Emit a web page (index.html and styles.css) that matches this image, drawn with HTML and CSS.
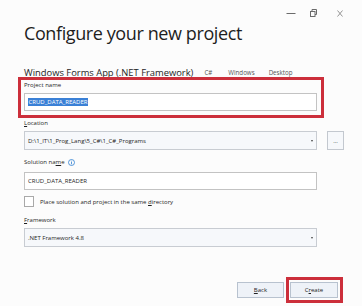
FILE: index.html
```html
<!DOCTYPE html>
<html lang="en">
<head>
<meta charset="utf-8">
<title>Configure your new project</title>
<link rel="stylesheet" href="styles.css">
</head>
<body>
<div class="window">
  <div class="titlebar">
    <svg class="tb-min" width="10" height="10" viewBox="0 0 10 10"><line x1="0.5" y1="5.5" x2="9.5" y2="5.5" stroke="#6b6b6b" stroke-width="1"/></svg>
    <svg class="tb-restore" width="7" height="8" viewBox="0 0 7 8"><rect x="0.5" y="2.5" width="4.5" height="5" fill="none" stroke="#6b6b6b"/><path d="M2 2.5V0.5H6.5V5.5H5" fill="none" stroke="#6b6b6b"/></svg>
    <svg class="tb-close" width="6" height="7" viewBox="0 0 6 7"><path d="M0.5 0.5L5.5 6.5M5.5 0.5L0.5 6.5" stroke="#8a8a8a" stroke-width="0.9"/></svg>
  </div>
  <div class="content">
    <h1 class="title">Configure your new project</h1>
    <div class="subtitle-row">
      <span class="subtitle">Windows Forms App (.NET Framework)</span>
      <span class="tag tag-cs">C#</span>
      <span class="tag tag-win">Windows</span>
      <span class="tag">Desktop</span>
    </div>
    <div class="highlight-box">
      <div class="label">Project name</div>
      <div class="input input-project"><span class="selected">CRUD_DATA_READER</span></div>
    </div>
    <div class="label label-location"><u>L</u>ocation</div>
    <div class="location-row">
      <div class="combo combo-location"><span class="value">D:\1_IT\1_Prog_Lang\5_C#\1_C#_Programs</span><span class="arrow"></span></div>
      <div class="browse">...</div>
    </div>
    <div class="label label-solution">Solution na<u>m</u>e
      <svg class="info" width="7" height="7" viewBox="0 0 14 14"><circle cx="7" cy="7" r="6" fill="none" stroke="#2f7fd1" stroke-width="1.6"/><rect x="6.2" y="6" width="1.6" height="4.6" fill="#2f7fd1"/><rect x="6.2" y="3.4" width="1.6" height="1.6" fill="#2f7fd1"/></svg>
    </div>
    <div class="input input-solution"><span class="value">CRUD_DATA_READER</span></div>
    <div class="check-row">
      <span class="checkbox"></span>
      <span class="check-label">Place solution and project in the same <u>d</u>irectory</span>
    </div>
    <div class="label label-framework"><u>F</u>ramework</div>
    <div class="combo combo-framework"><span class="value">.NET Framework 4.8</span><span class="arrow"></span></div>
  </div>
  <div class="footer">
    <div class="btn btn-back"><u>B</u>ack</div>
    <div class="create-box"><div class="btn btn-create">C<u>r</u>eate</div></div>
  </div>
</div>
</body>
</html>
```
FILE: styles.css
```css
html, body {
  margin: 0;
  padding: 0;
}
body {
  width: 362px;
  height: 306px;
  overflow: hidden;
  background: #fcfcfc;
  font-family: "Open Sans", "Noto Sans", sans-serif;
  color: #1f1f1f;
}
.window {
  display: flex;
  flex-direction: column;
  height: 306px;
}
.titlebar {
  box-sizing: border-box;
  height: 22px;
  padding: 4px 19px 0 0;
  display: flex;
  justify-content: flex-end;
  align-items: center;
}
.tb-min { margin-right: 14px; }
.tb-restore { margin-right: 20px; }
.content {
  padding-left: 24px;
  display: flex;
  flex-direction: column;
}
.title {
  margin: 0;
  font-weight: 400;
  font-size: 18px;
  letter-spacing: -0.4px;
  line-height: 22px;
  color: #1e1e1e;
  white-space: nowrap;
}
.subtitle-row {
  margin-top: 21px;
  height: 14px;
  display: flex;
  align-items: center;
  white-space: nowrap;
}
.subtitle {
  font-size: 9.4px;
  color: #1e1e1e;
}
.tag {
  font-size: 6.2px;
  color: #555;
}
.tag-cs { margin-left: 11px; margin-right: 16px; }
.tag-win { margin-right: 14px; }
.highlight-box {
  box-sizing: border-box;
  margin-top: -2px;
  margin-left: -6px;
  width: 306px;
  border: 3px solid #cc2f3b;
  padding: 0 0 4px 3px;
}
.label {
  font-size: 6px;
  line-height: 10px;
  height: 10px;
  white-space: nowrap;
  display: flex;
  align-items: center;
}
.input, .combo {
  box-sizing: border-box;
  width: 293px;
  border: 1px solid #c3c3c3;
  background: #fff;
  display: flex;
  align-items: center;
  padding-left: 3px;
  font-size: 6px;
  white-space: nowrap;
}
.input-project {
  margin-top: 3px;
  height: 18px;
}
.selected {
  background: #3a80d6;
  color: #fff;
  line-height: 8px;
  padding: 0 0.5px;
}
.label-location {
  margin-top: 0px;
}
.location-row {
  margin-top: 3px;
  display: flex;
  align-items: center;
}
.combo {
  position: relative;
  height: 19px;
  background: #f6f8fb;
  border-color: #c8ccd2;
}
.combo .arrow {
  position: absolute;
  right: 3px;
  top: 8px;
  width: 0;
  height: 0;
  border-left: 1.5px solid transparent;
  border-right: 1.5px solid transparent;
  border-top: 2px solid #444;
}
.browse {
  box-sizing: border-box;
  margin-left: 10px;
  width: 17px;
  height: 19px;
  border: 1px solid #c3c8cf;
  background: #f6f8fb;
  font-size: 6px;
  display: flex;
  align-items: center;
  justify-content: center;
  color: #333;
}
.label-solution {
  margin-top: 7px;
}
.info {
  margin-left: 3px;
}
.input-solution {
  margin-top: 5px;
  height: 18px;
}
.check-row {
  margin-top: 6px;
  height: 11px;
  display: flex;
  align-items: center;
  white-space: nowrap;
}
.checkbox {
  box-sizing: border-box;
  width: 10px;
  height: 11px;
  border: 1px solid #a9a9a9;
  background: #fff;
}
.check-label {
  margin-left: 6px;
  font-size: 6px;
}
.label-framework {
  margin-top: 8px;
}
.combo-framework {
  margin-top: 3px;
}
.footer {
  margin-top: 30px;
  display: flex;
  justify-content: flex-end;
  align-items: center;
  padding-right: 19px;
}
.btn {
  box-sizing: border-box;
  height: 16px;
  border: 1px solid #b8c2cf;
  background: #eef2f8;
  font-size: 6px;
  display: flex;
  align-items: center;
  justify-content: center;
  color: #222;
}
.btn-back {
  width: 47px;
  margin-right: 2px;
}
.create-box {
  box-sizing: border-box;
  border: 3px solid #cc2f3b;
  padding: 2px 2px 2px 1px;
}
.btn-create {
  width: 48px;
}
```
